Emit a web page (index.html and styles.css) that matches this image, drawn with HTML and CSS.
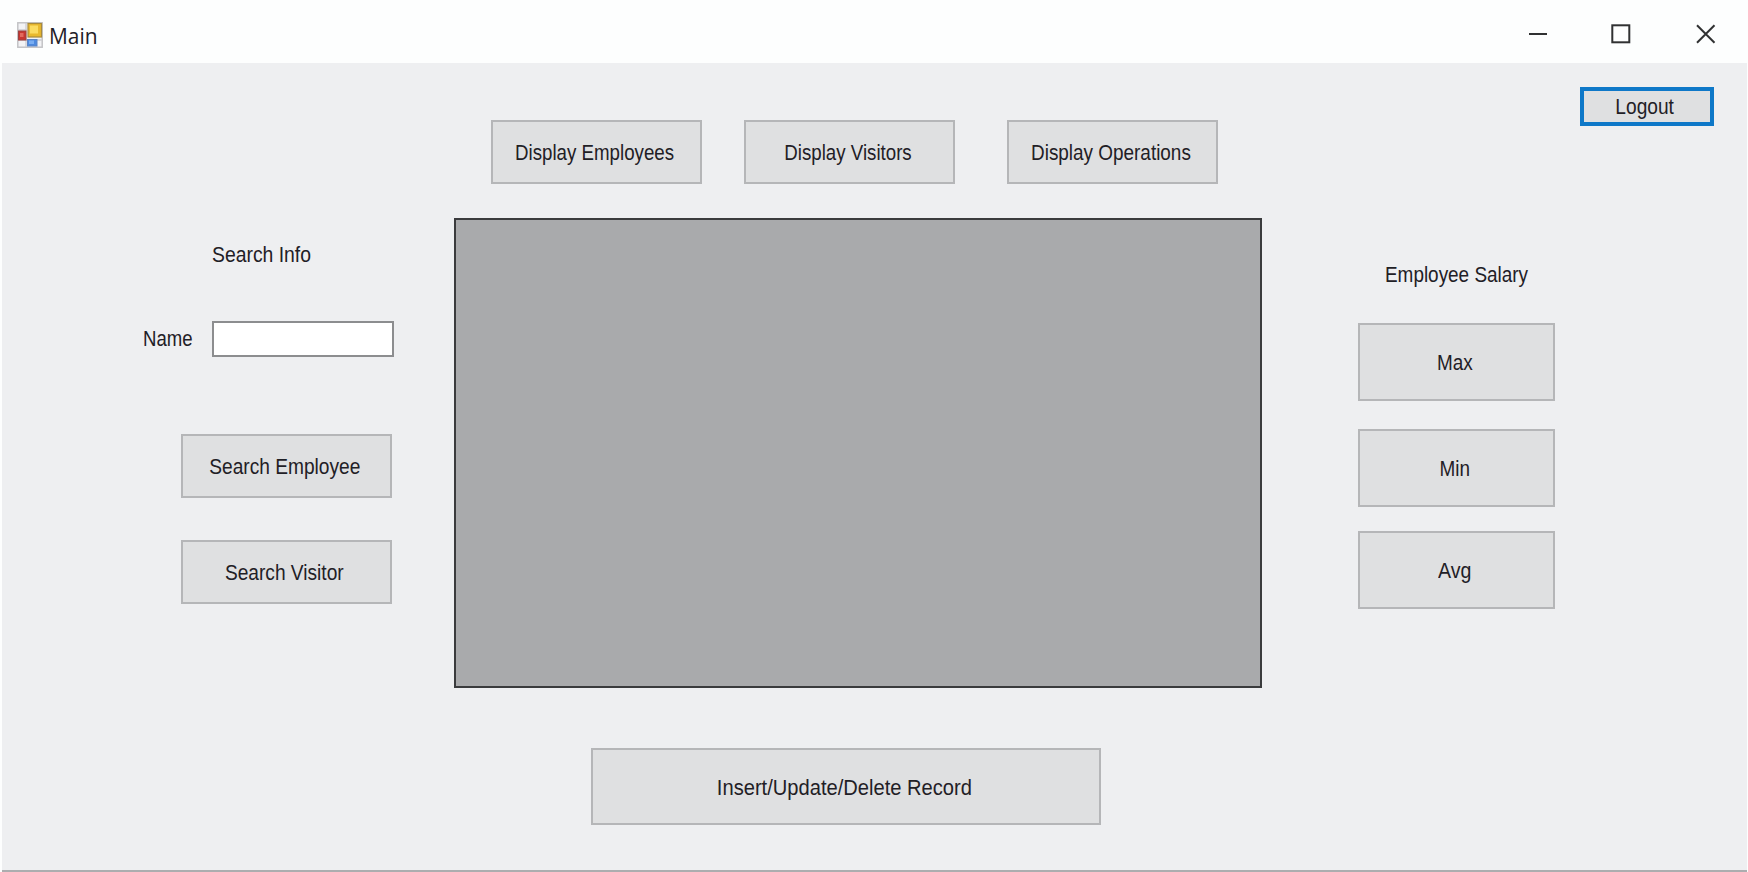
FILE: index.html
```html
<!DOCTYPE html>
<html lang="en">
<head>
<meta charset="utf-8">
<title>Main</title>
<link rel="stylesheet" href="styles.css">
</head>
<body>
<header class="titlebar">
  <svg class="app-icon" width="26" height="26" viewBox="0 0 26 26">
    <rect x="0.8" y="0.8" width="24.4" height="24.4" fill="#f3f3f5" stroke="#c3c3c6" stroke-width="1.5"/>
    <path d="M9 1v24M1 8h9M1 18h24" stroke="#cccbd0" stroke-width="1.3"/>
    <rect x="11" y="1.500" width="13.5" height="13.5" fill="#e9b92e" stroke="#a98b3d" stroke-width="1.2"/>
    <rect x="13" y="3.500" width="8" height="8" fill="#fbdc62"/>
    <rect x="1.5" y="9" width="7.5" height="9" fill="#c73731" stroke="#9b4240"/>
    <rect x="3" y="11" width="3.5" height="4" fill="#e26a5e"/>
    <rect x="10.5" y="17.5" width="9.5" height="6.5" fill="#4c89df" stroke="#5b84c4"/>
    <rect x="12" y="18.5" width="5" height="3.5" fill="#78adf2"/>
  </svg>
  <span class="title">Main</span>
  <svg class="controls" width="190" height="24" viewBox="0 0 190 24" fill="none" stroke="#303132" stroke-width="2">
    <path d="M1 12H19"/>
    <rect x="84.3" y="3.3" width="17" height="17"/>
    <path d="M169 3.300L186.500 20.800M186.500 3.300L169 20.800"/>
  </svg>
</header>
<main class="client">
  <section class="search">
    <h2 class="label search-title"><span class="t t-info">Search Info</span></h2>
    <label class="name-row"><span class="name-label"><span class="t t-name">Name</span></span><input class="field" type="text"></label>
    <button class="btn"><span class="t t-semp">Search Employee</span></button>
    <button class="btn second"><span class="t t-svis">Search Visitor</span></button>
  </section>
  <section class="center">
    <div class="display-row">
      <button class="btn"><span class="t t-demp">Display Employees</span></button>
      <button class="btn"><span class="t t-dvis">Display Visitors</span></button>
      <button class="btn"><span class="t t-dop">Display Operations</span></button>
    </div>
    <div class="grid-view"></div>
    <button class="btn record"><span class="t t-rec">Insert/Update/Delete Record</span></button>
  </section>
  <section class="side">
    <button class="btn logout"><span class="t t-out">Logout</span></button>
    <h2 class="label salary-title"><span class="t t-sal">Employee Salary</span></h2>
    <div class="stats">
      <button class="btn stat"><span class="t t-max">Max</span></button>
      <button class="btn stat"><span class="t t-min">Min</span></button>
      <button class="btn stat last"><span class="t t-avg">Avg</span></button>
    </div>
  </section>
</main>
<footer class="edge"><svg width="160" height="2" viewBox="0 0 160 2"><path d="M0 1.500H150" stroke="#77787a" stroke-width="1" stroke-dasharray="8 5 7 4 3 5 6 7"/></svg></footer>
</body>
</html>
```
FILE: styles.css
```css
* { box-sizing: border-box; }
body {
  margin: 0;
  width: 1748px;
  height: 872px;
  overflow: hidden;
  display: flex;
  flex-direction: column;
  background: #fdfefe;
  font-family: "Liberation Sans", Arial, sans-serif;
  font-size: 22px;
  color: #1f2026;
}
.titlebar { height: 63px; flex: none; display: flex; align-items: flex-start; padding: 22px 30px 0 17px; }
.app-icon { flex: none; }
.title {
  margin: -2px 0 0 6px;
  font: 22px/30px "Open Sans", sans-serif;
  transform: scaleX(.95);
  transform-origin: left;
}
.controls { margin-left: auto; }
.client { height: 807px; flex: none; display: flex; margin: 0 1px 0 2px; background: #eeeff1; }
.t { display: inline-block; white-space: nowrap; line-height: 26px; transform: scaleX(var(--s, .86)); }
.label { margin: 0; font-size: 22px; font-weight: 400; line-height: 26px; height: 26px; }
.label .t, .name-label .t { transform-origin: left; }
.btn {
  display: flex;
  align-items: center;
  justify-content: center;
  width: 211px;
  height: 64px;
  flex: none;
  padding: 2px 4px 0 0;
  border: 2px solid #b5b6b8;
  background: #dfe0e1;
  color: inherit;
  font: inherit;
}
.search { width: 452px; flex: none; padding: 179px 0 0 179px; }
.search-title { padding-left: 30px; }
.name-row { display: flex; align-items: center; margin: 53px 0 77px -39px; height: 36px; }
.name-label { width: 70px; flex: none; height: 26px; line-height: 26px; }
.name-label .t { margin-left: 1px; }
.field { width: 182px; height: 36px; border: 2px solid #8c8d8f; border-radius: 0; background: #fff; padding: 0 4px; font: inherit; }
.second { margin-top: 42px; }
.center { width: 808px; flex: none; padding-top: 57px; }
.display-row { display: flex; padding-left: 37px; gap: 42px; }
.display-row .btn:last-child { margin-left: 10px; }
.grid-view { height: 470px; margin-top: 34px; border: 2px solid #3a3b3d; background: #a9aaac; }
.record { width: 510px; height: 77px; margin: 60px 0 0 137px; }
.side { flex: 1; padding-top: 24px; }
.logout { width: 134px; height: 39px; margin-left: 318px; padding-top: 0; border: 4px solid #0e78c8; }
.salary-title { margin: 136px 0 0 123px; }
.stats { display: flex; flex-direction: column; gap: 28px; margin: 35px 0 0 96px; }
.stat { width: 197px; height: 78px; }
.last { margin-top: -4px; }
.edge { height: 2px; flex: none; margin: 0 1px 0 2px; padding-left: 275px; background: #acadaf; line-height: 0; }
.t-info { --s: .88; margin-left: 1px; }
.t-name { --s: .845; }
.t-semp { --s: .87; }
.t-svis { --s: .87; }
.t-demp { --s: .85; }
.t-dvis { --s: .85; }
.t-dop { --s: .86; }
.t-rec { --s: .915; }
.t-out { --s: .87; }
.t-sal { --s: .86; }
.t-max { --s: .86; }
.t-min { --s: .86; }
.t-avg { --s: .89; }
```
